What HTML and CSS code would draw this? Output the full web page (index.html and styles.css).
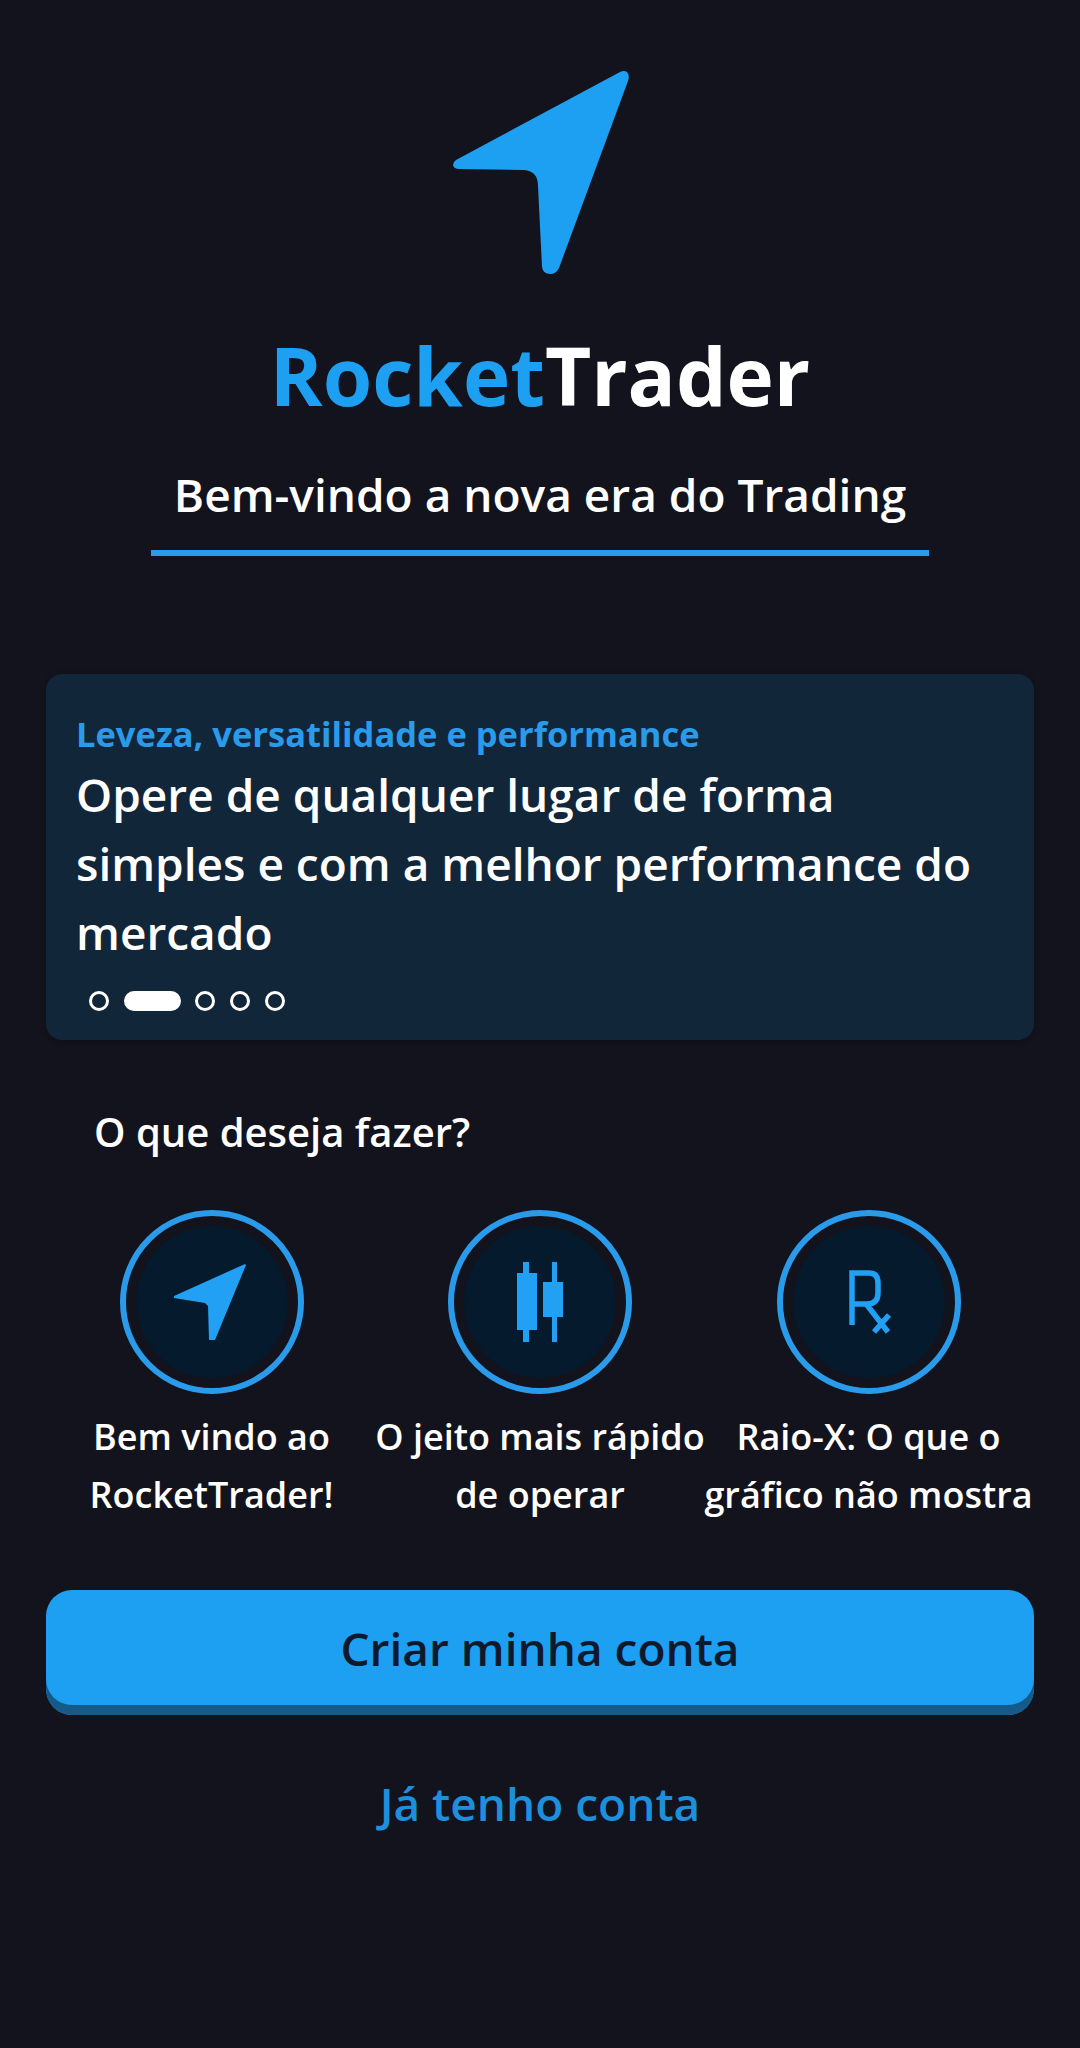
FILE: index.html
```html
<!DOCTYPE html>
<html lang="pt">
<head>
<meta charset="utf-8">
<title>RocketTrader</title>
<link rel="stylesheet" href="styles.css">
</head>
<body>
<main class="page">
  <header class="hero">
    <svg class="logo" viewBox="0 0 180 206" aria-hidden="true">
      <path d="M170 2 L6 90 Q3 92 3 95 Q4 99 9 99 L74 100 Q88 101 88 116 L92 197 Q93 204 100 204 Q106 204 109 198 L178 11 Q180 5 177 2 Q174 0 170 2 Z"/>
    </svg>
    <h1 class="brand"><span class="brand-a">Rocket</span><span class="brand-b">Trader</span></h1>
    <p class="tagline">Bem-vindo a nova era do Trading</p>
    <div class="rule"></div>
  </header>

  <section class="card">
    <h2 class="card-label">Leveza, versatilidade e performance</h2>
    <p class="card-text">Opere de qualquer lugar de forma simples e com a melhor performance do mercado</p>
    <div class="dots">
      <span class="dot"></span><span class="dot active"></span><span class="dot"></span><span class="dot"></span><span class="dot"></span>
    </div>
  </section>

  <h3 class="question">O que deseja fazer?</h3>

  <section class="stories">
    <article class="story">
      <div class="ring"><div class="disc">
        <svg class="ico" viewBox="0 0 80 80"><path d="M73 2 L2 34 L2 36 L33 41 L36 44 L37 78 L43 78 L74 3 Z"/></svg>
      </div></div>
      <p>Bem vindo ao<br>RocketTrader!</p>
    </article>
    <article class="story">
      <div class="ring"><div class="disc">
        <svg class="ico" viewBox="0 0 80 80"><path d="M23 0h6v11h8v57h-8v12h-6V68h-6V11h6z"/><path d="M52 0h5v20h6v35h-6v25h-5V55h-9V20h9z"/></svg>
      </div></div>
      <p>O jeito mais rápido<br>de operar</p>
    </article>
    <article class="story">
      <div class="ring"><div class="disc">
        <svg class="ico" viewBox="0 0 80 80"><path class="line" d="M23 63V11h17q9 0 9 10v10q0 11-11 11H23M38 43l21 27M60 53L45 70"/></svg>
      </div></div>
      <p>Raio-X: O que o<br>gráfico não mostra</p>
    </article>
  </section>

  <button class="primary">Criar minha conta</button>
  <a class="secondary" href="#">Já tenho conta</a>
</main>
</body>
</html>
```
FILE: styles.css
```css
* { box-sizing: border-box; }
html, body { margin: 0; padding: 0; }
body {
  background: #12131c;
  color: #fff;
  font-family: "Open Sans", "Noto Sans", sans-serif;
}
.page {
  width: 1080px;
  height: 2048px;
  padding: 70px 46px 0;
  display: flex;
  flex-direction: column;
  align-items: stretch;
}
.hero { display: flex; flex-direction: column; align-items: center; }
.logo { width: 180px; height: 206px; fill: #1d9ff2; display: block; }
.brand {
  margin: 44px 0 0;
  font-weight: 700;
  font-size: 80px;
  line-height: 110px;
  letter-spacing: 0;
}
.brand-a { color: #1d9ff2; }
.tagline { margin: 32px 0 0; font-size: 46px; line-height: 64px; font-weight: 600; }
.rule { width: 778px; height: 6px; margin-top: 24px; background: #2a9bea; }
.card {
  margin-top: 118px;
  height: 366px;
  background: #12263a;
  border-radius: 16px;
  padding: 36px 30px 0;
  box-shadow: 0 2px 6px rgba(0,0,0,.25);
}
.card-label {
  margin: 0;
  font-size: 34.500px;
  line-height: 48px;
  font-weight: 700;
  color: #2a9bea;
}
.card-text { margin: 2px 0 0; font-size: 46px; line-height: 69px; font-weight: 600; }
.dots { display: flex; align-items: center; gap: 14.67px; margin: 24px 0 0 13px; }
.dot { width: 20px; height: 20px; border: 3px solid #fff; border-radius: 50%; }
.dot.active { width: 57px; border-radius: 10px; background: #fff; }
.question { margin: 64px 0 0 48px; font-size: 40px; line-height: 56px; font-weight: 600; }
.stories { display: flex; justify-content: center; margin: 50px -16px 0; }
.story { width: 328.5px; display: flex; flex-direction: column; align-items: center; }
.story p { margin: 14px -20px 0; font-size: 36px; line-height: 58px; font-weight: 600; text-align: center; white-space: nowrap; }
.ring {
  width: 184px;
  height: 184px;
  border: 6px solid #2a9bea;
  border-radius: 50%;
  padding: 10px;
}
.disc {
  width: 100%;
  height: 100%;
  border-radius: 50%;
  background: #051a2d;
  display: flex;
  align-items: center;
  justify-content: center;
}
.ico { width: 80px; height: 80px; fill: #22a0f4; display: block; overflow: visible; }
.ico .line { fill: none; stroke: #22a0f4; stroke-width: 5.5; }
.primary {
  margin-top: 66px;
  height: 125px;
  padding-bottom: 10px;
  border: 0;
  border-radius: 26px;
  background: #1d9ff2;
  box-shadow: inset 0 -10px 0 #155a88;
  color: #0e1a2c;
  font-family: inherit;
  font-size: 46px;
  font-weight: 600;
}
.secondary {
  margin-top: 56px;
  text-align: center;
  color: #1d8fdc;
  font-size: 46px;
  line-height: 64px;
  font-weight: 600;
  text-decoration: none;
}
```
